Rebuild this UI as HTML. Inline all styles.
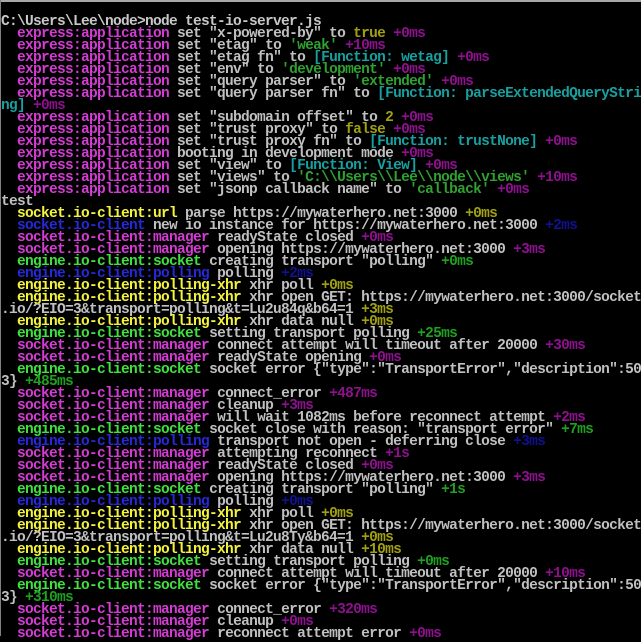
<!DOCTYPE html>
<html><head><meta charset="utf-8"><style>
html,body{margin:0;padding:0;background:#000;}
body{width:641px;height:636px;overflow:hidden;position:relative;}
.top{position:absolute;left:0;top:0;width:641px;height:2px;background:#a8a8a8;}
.left{position:absolute;left:0;top:0;width:1px;height:636px;background:#808080;}
pre{position:absolute;left:1px;top:16px;margin:0;font-family:"Liberation Mono",monospace;font-weight:bold;font-size:14.5px;letter-spacing:-0.7px;line-height:12px;color:#c0c0c0;white-space:pre;}
.m{color:#d43cd4}.dm{color:#8e108e}.y{color:#f4f43c}.dy{color:#a0a010}.g{color:#40e040}.dg{color:#20a020}.b{color:#2828d8}.db{color:#101090}.t{color:#18a0a0}.s{color:#30a030}.w{color:#c8c8c8}
</style></head><body>
<div class="top"></div><div class="left"></div>
<pre><span class="w">C:\Users\Lee\node&gt;node test-io-server.js</span>
  <span class="m">express:application</span> set "x-powered-by" to <span class="dy">true</span> <span class="dm">+0ms</span>
  <span class="m">express:application</span> set "etag" to <span class="s">'weak'</span> <span class="dm">+10ms</span>
  <span class="m">express:application</span> set "etag fn" to <span class="t">[Function: wetag]</span> <span class="dm">+0ms</span>
  <span class="m">express:application</span> set "env" to <span class="s">'development'</span> <span class="dm">+0ms</span>
  <span class="m">express:application</span> set "query parser" to <span class="s">'extended'</span> <span class="dm">+0ms</span>
  <span class="m">express:application</span> set "query parser fn" to <span class="t">[Function: parseExtendedQueryStri</span>
<span class="t">ng]</span> <span class="dm">+0ms</span>
  <span class="m">express:application</span> set "subdomain offset" to <span class="dy">2</span> <span class="dm">+0ms</span>
  <span class="m">express:application</span> set "trust proxy" to <span class="dy">false</span> <span class="dm">+0ms</span>
  <span class="m">express:application</span> set "trust proxy fn" to <span class="t">[Function: trustNone]</span> <span class="dm">+0ms</span>
  <span class="m">express:application</span> booting in development mode <span class="dm">+0ms</span>
  <span class="m">express:application</span> set "view" to <span class="t">[Function: View]</span> <span class="dm">+0ms</span>
  <span class="m">express:application</span> set "views" to <span class="s">'C:\\Users\\Lee\\node\\views'</span> <span class="dm">+10ms</span>
  <span class="m">express:application</span> set "jsonp callback name" to <span class="s">'callback'</span> <span class="dm">+0ms</span>
test
  <span class="y">socket.io-client:url</span> parse https://mywaterhero.net:3000 <span class="dy">+0ms</span>
  <span class="b">socket.io-client</span> new io instance for https://mywaterhero.net:3000 <span class="db">+2ms</span>
  <span class="m">socket.io-client:manager</span> readyState closed <span class="dm">+0ms</span>
  <span class="m">socket.io-client:manager</span> opening https://mywaterhero.net:3000 <span class="dm">+3ms</span>
  <span class="g">engine.io-client:socket</span> creating transport "polling" <span class="dg">+0ms</span>
  <span class="b">engine.io-client:polling</span> polling <span class="db">+2ms</span>
  <span class="y">engine.io-client:polling-xhr</span> xhr poll <span class="dy">+0ms</span>
  <span class="y">engine.io-client:polling-xhr</span> xhr open GET: https://mywaterhero.net:3000/socket
.io/?EIO=3&amp;transport=polling&amp;t=Lu2u84q&amp;b64=1 <span class="dy">+3ms</span>
  <span class="y">engine.io-client:polling-xhr</span> xhr data null <span class="dy">+0ms</span>
  <span class="g">engine.io-client:socket</span> setting transport polling <span class="dg">+25ms</span>
  <span class="m">socket.io-client:manager</span> connect attempt will timeout after 20000 <span class="dm">+30ms</span>
  <span class="m">socket.io-client:manager</span> readyState opening <span class="dm">+0ms</span>
  <span class="g">engine.io-client:socket</span> socket error {"type":"TransportError","description":50
3} <span class="dg">+485ms</span>
  <span class="m">socket.io-client:manager</span> connect_error <span class="dm">+487ms</span>
  <span class="m">socket.io-client:manager</span> cleanup <span class="dm">+3ms</span>
  <span class="m">socket.io-client:manager</span> will wait 1082ms before reconnect attempt <span class="dm">+2ms</span>
  <span class="g">engine.io-client:socket</span> socket close with reason: "transport error" <span class="dg">+7ms</span>
  <span class="b">engine.io-client:polling</span> transport not open - deferring close <span class="db">+3ms</span>
  <span class="m">socket.io-client:manager</span> attempting reconnect <span class="dm">+1s</span>
  <span class="m">socket.io-client:manager</span> readyState closed <span class="dm">+0ms</span>
  <span class="m">socket.io-client:manager</span> opening https://mywaterhero.net:3000 <span class="dm">+3ms</span>
  <span class="g">engine.io-client:socket</span> creating transport "polling" <span class="dg">+1s</span>
  <span class="b">engine.io-client:polling</span> polling <span class="db">+0ms</span>
  <span class="y">engine.io-client:polling-xhr</span> xhr poll <span class="dy">+0ms</span>
  <span class="y">engine.io-client:polling-xhr</span> xhr open GET: https://mywaterhero.net:3000/socket
.io/?EIO=3&amp;transport=polling&amp;t=Lu2u8Ty&amp;b64=1 <span class="dy">+0ms</span>
  <span class="y">engine.io-client:polling-xhr</span> xhr data null <span class="dy">+10ms</span>
  <span class="g">engine.io-client:socket</span> setting transport polling <span class="dg">+0ms</span>
  <span class="m">socket.io-client:manager</span> connect attempt will timeout after 20000 <span class="dm">+10ms</span>
  <span class="g">engine.io-client:socket</span> socket error {"type":"TransportError","description":50
3} <span class="dg">+310ms</span>
  <span class="m">socket.io-client:manager</span> connect_error <span class="dm">+320ms</span>
  <span class="m">socket.io-client:manager</span> cleanup <span class="dm">+0ms</span>
  <span class="m">socket.io-client:manager</span> reconnect attempt error <span class="dm">+0ms</span></pre>
</body></html>
